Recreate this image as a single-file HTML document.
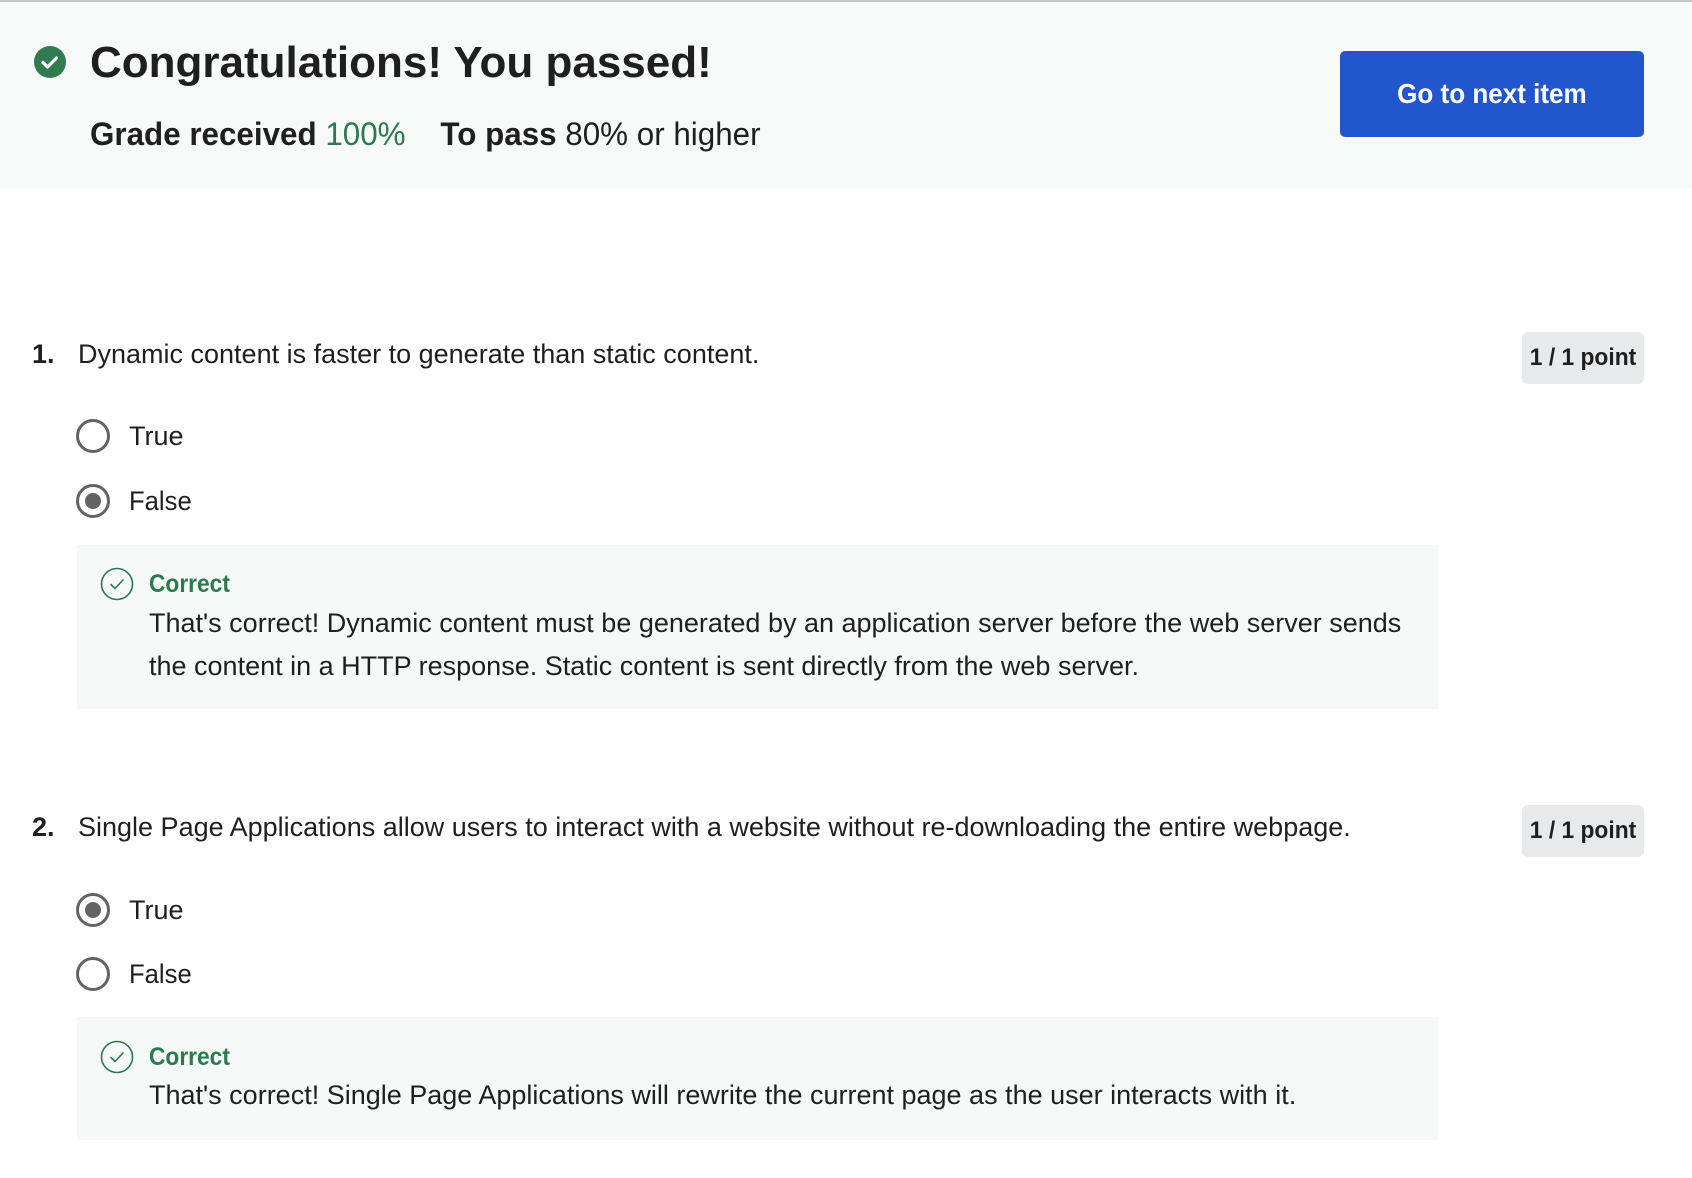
<!DOCTYPE html>
<html><head><meta charset="utf-8"><style>
*{margin:0;padding:0;box-sizing:border-box}
body{width:1692px;height:1178px;background:#fff;position:relative;overflow:hidden;font-family:"Liberation Sans",sans-serif;color:#1f1f1f}
.a{position:absolute;white-space:nowrap}
.s{display:inline-block;transform-origin:0 50%}
.hdr{position:absolute;left:0;top:0;width:1692px;height:188px;background:#f8f9f9;border-top:2px solid #c4c6c8}
.btn{position:absolute;left:1340px;top:51px;width:304px;height:86px;background:#2256cc;border-radius:5px;color:#fff;font-weight:bold;font-size:28px;line-height:86px;text-align:center}
.badge{position:absolute;left:1522px;width:122px;height:52px;background:#e8e9eb;border-radius:6px;font-weight:bold;font-size:24px;line-height:52px;text-align:center}
.radio{position:absolute;left:76px;width:34px;height:34px;border:3px solid #636363;border-radius:50%}
.radio.on::after{content:"";position:absolute;left:6px;top:6px;width:16px;height:16px;border-radius:50%;background:#636363}
.box{position:absolute;left:77px;width:1361px;background:#f7f8f8}
.q{font-size:27px;line-height:36px}
.g{color:#2a7a4e}
</style></head><body>
<div class="hdr"></div>
<svg class="a" style="left:34px;top:46px" width="32" height="32" viewBox="0 0 32 32"><circle cx="16" cy="16" r="16" fill="#327a50"/><path d="M9 16.5l4.5 4.5 9-9" fill="none" stroke="#fff" stroke-width="3.2" stroke-linecap="round" stroke-linejoin="round"/></svg>
<div class="a" style="left:90px;top:37px;font-size:44px;line-height:52px;font-weight:bold;color:#1f1f1f"><span class="s">Congratulations! You passed!</span></div>
<div class="a" style="left:90px;top:115px;font-size:32px;line-height:38px"><span class="s" style="transform:scaleX(.98)"><b>Grade received</b> <span class="g">100%</span>&nbsp;&nbsp;&nbsp; <b>To pass</b> 80% or higher</span></div>
<div class="btn"><span class="s" style="transform:scaleX(.93);transform-origin:50% 50%">Go to next item</span></div>

<div class="a q" style="left:32px;top:336px;font-weight:bold"><span class="s">1.</span></div>
<div class="a q" style="left:78px;top:336px"><span class="s">Dynamic content is faster to generate than static content.</span></div>
<div class="badge" style="top:332px"><span class="s" style="transform:scaleX(.95);transform-origin:50% 50%">1 / 1 point</span></div>
<div class="radio" style="top:419px"></div>
<div class="a q" style="left:129px;top:418px"><span class="s">True</span></div>
<div class="radio on" style="top:484px"></div>
<div class="a q" style="left:129px;top:483px"><span class="s" style="transform:scaleX(.95)">False</span></div>
<div class="box" style="top:545px;height:164px"></div>
<svg class="a" style="left:100px;top:567px" width="34" height="34" viewBox="0 0 34 34"><circle cx="17" cy="17" r="15.5" fill="none" stroke="#2a7a4e" stroke-width="1.6"/><path d="M11 17.5l4 4 8-8.5" fill="none" stroke="#2a7a4e" stroke-width="1.6" stroke-linecap="round" stroke-linejoin="round"/></svg>
<div class="a g" style="left:149px;top:568px;font-size:25px;line-height:32px;font-weight:bold"><span class="s" style="transform:scaleX(.91)">Correct</span></div>
<div class="a q" style="left:149px;top:602px;line-height:43px"><span class="s">That's correct! Dynamic content must be generated by an application server before the web server sends<br>the content in a HTTP response. Static content is sent directly from the web server.</span></div>

<div class="a q" style="left:32px;top:809px;font-weight:bold"><span class="s">2.</span></div>
<div class="a q" style="left:78px;top:809px"><span class="s">Single Page Applications allow users to interact with a website without re-downloading the entire webpage.</span></div>
<div class="badge" style="top:805px"><span class="s" style="transform:scaleX(.95);transform-origin:50% 50%">1 / 1 point</span></div>
<div class="radio on" style="top:893px"></div>
<div class="a q" style="left:129px;top:892px"><span class="s">True</span></div>
<div class="radio" style="top:957px"></div>
<div class="a q" style="left:129px;top:956px"><span class="s" style="transform:scaleX(.95)">False</span></div>
<div class="box" style="top:1017px;height:123px"></div>
<svg class="a" style="left:100px;top:1040px" width="34" height="34" viewBox="0 0 34 34"><circle cx="17" cy="17" r="15.5" fill="none" stroke="#2a7a4e" stroke-width="1.6"/><path d="M11 17.5l4 4 8-8.5" fill="none" stroke="#2a7a4e" stroke-width="1.6" stroke-linecap="round" stroke-linejoin="round"/></svg>
<div class="a g" style="left:149px;top:1041px;font-size:25px;line-height:32px;font-weight:bold"><span class="s" style="transform:scaleX(.91)">Correct</span></div>
<div class="a q" style="left:149px;top:1077px"><span class="s">That's correct! Single Page Applications will rewrite the current page as the user interacts with it.</span></div>
</body></html>
